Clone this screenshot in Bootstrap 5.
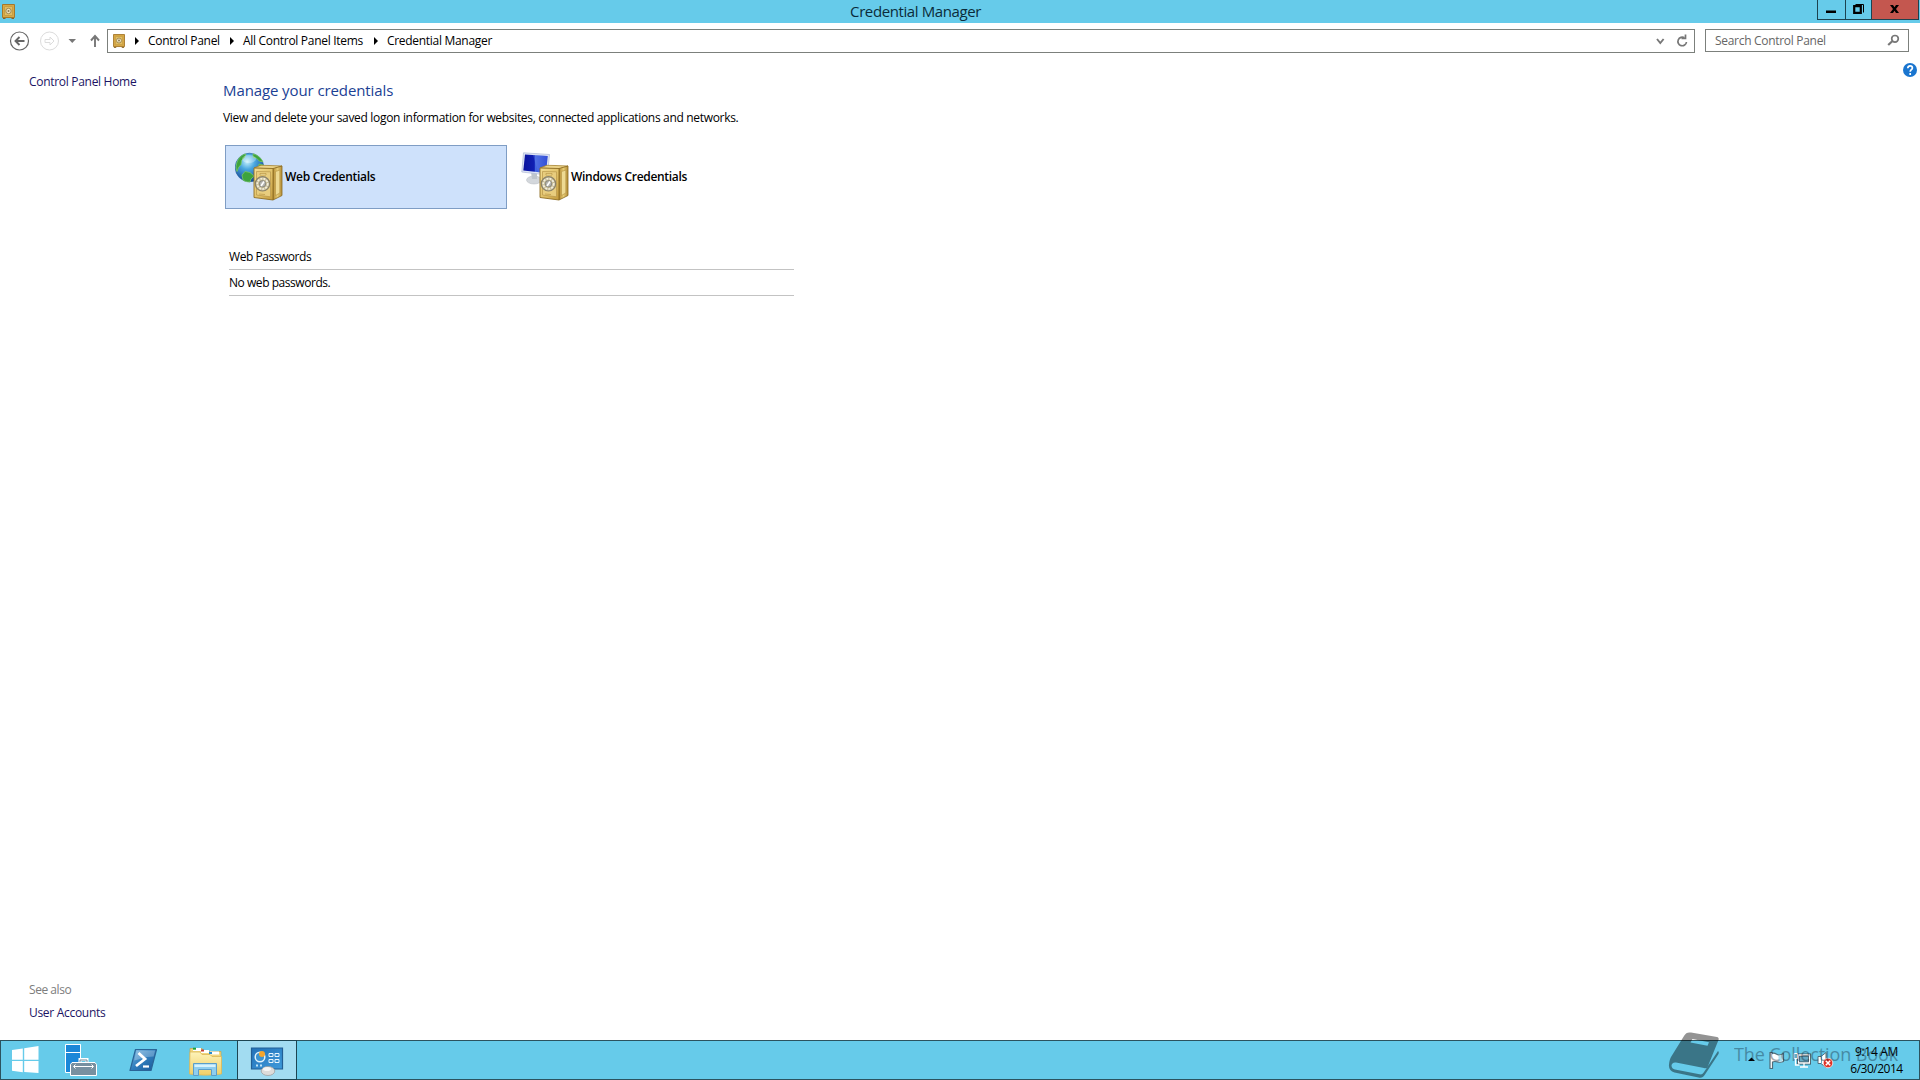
<!DOCTYPE html>
<html lang="en">
<head>
<meta charset="utf-8">
<title>Credential Manager</title>
<link href="https://cdn.jsdelivr.net/npm/bootstrap@5.3.0/dist/css/bootstrap.min.css" rel="stylesheet">
<style>
body{font-family:"Open Sans","Noto Sans",sans-serif;font-size:12px;line-height:16px;letter-spacing:-.3px;color:#000;background:#fff;white-space:nowrap;overflow:hidden}
svg{display:block;flex:none}
a,a:hover{color:inherit;text-decoration:none}
.title-bar{height:23px;background:#66cbea;padding-left:2px}
.title-text{font-size:15px;line-height:23px;letter-spacing:-.4px;padding-right:104px;color:#0b2b3a}
.win-buttons{top:0;left:1817px;height:20px;border:1px solid #1c4350;border-top:0}
.win-buttons .wb{border-right:1px solid #1c4350;height:19px}
.win-buttons .wb-min{width:28px}
.win-buttons .wb-max{width:26px}
.win-buttons .wb-close{width:46px;background:#c4574f;border-right:0}
.nav-strip{height:35px;padding:6px 11px 0 9px}
.nav-glyphs{width:98px;height:24px}
.address{width:1588px;height:24px;border:1px solid #7c807c;padding-left:5px;line-height:22px}
.crumb{margin-left:7px}
.crumb-cp{width:82px}
.crumb-all{margin-left:7px;width:131px}
.search-field{width:204px;height:23px;border:1px solid #7c807c;margin-left:10px;color:#666;padding:0 8px 0 9px;line-height:22px}
.side-pane{width:223px;padding:16px 0 19px 29px;color:#1b1464}
.see-also{color:#7d7d7d;letter-spacing:-.45px;margin-bottom:7px}
.main-pane{padding-top:21px}
.page-head{font-size:15px;line-height:22px;letter-spacing:-.1px;color:#1b3f94;font-weight:400;margin:0}
.page-sub{margin:9px 0 19px;letter-spacing:-.32px}
.vault-row{margin-left:2px}
.vault{width:282px;height:64px;border:1px solid #fff;padding:6px 0 0 9px}
.vault.on{background:#cee1fb;border-color:#7f9dc4}
.vault-name{font-weight:600;margin:17px 0 0 2px}
.pw-list{width:565px;margin:35px 0 0 6px;letter-spacing:-.45px}
.pw-list div{border-bottom:1px solid #c3c3c3;height:26px;padding-top:5px}
.task-bar{height:40px;background:#66cbea;border:1px solid #2b535f}
.task-btn{width:62px;height:38px}
.task-active{width:58px;margin-left:3px;background:#a2dcf1;box-shadow:0 0 0 1px #1d4552}
.clock{width:85px;line-height:17px;padding-top:2px}
.clock .day{letter-spacing:-.5px}
.help-dot{right:3px;top:63px}
.mark-brand{left:1667px;top:1030px;color:#000;opacity:.42}
.mark-brand span{font-size:18px;line-height:24px;letter-spacing:-.1px;margin:-2px 0 0 14px;color:#123;opacity:.9}
</style>
<script src="https://cdn.jsdelivr.net/npm/bootstrap@5.3.0/dist/js/bootstrap.bundle.min.js"></script>
</head>
<body class="vh-100 d-flex flex-column position-relative">
<svg width="0" height="0" class="position-absolute">
<defs>
<linearGradient id="gold" x1="0" y1="0" x2="1" y2="1"><stop offset="0" stop-color="#f3dd94"/><stop offset=".5" stop-color="#e3c46c"/><stop offset="1" stop-color="#c39a3c"/></linearGradient>
<linearGradient id="goldside" x1="0" y1="0" x2="1" y2="0"><stop offset="0" stop-color="#b48b33"/><stop offset=".5" stop-color="#e6cb74"/><stop offset="1" stop-color="#b38c36"/></linearGradient>
<radialGradient id="sea" cx=".42" cy=".3" r=".75"><stop offset="0" stop-color="#c5f1fd"/><stop offset=".35" stop-color="#4ba8e0"/><stop offset="1" stop-color="#10408f"/></radialGradient>
<linearGradient id="screen" x1="0" y1="0" x2="1" y2="0"><stop offset="0" stop-color="#0a139c"/><stop offset=".45" stop-color="#1020b4"/><stop offset=".5" stop-color="#4466e0"/><stop offset="1" stop-color="#1b35cd"/></linearGradient>
<linearGradient id="ps" x1="0" y1="0" x2="1" y2="1"><stop offset="0" stop-color="#79b8e2"/><stop offset=".5" stop-color="#2f7dbd"/><stop offset="1" stop-color="#1b5795"/></linearGradient>
<linearGradient id="folder" x1="0" y1="0" x2="0" y2="1"><stop offset="0" stop-color="#fdf3b8"/><stop offset="1" stop-color="#efcf68"/></linearGradient>
<linearGradient id="panel" x1="0" y1="0" x2="1" y2="1"><stop offset="0" stop-color="#2372b8"/><stop offset="1" stop-color="#3f9adb"/></linearGradient>
<symbol id="minisafe" viewBox="0 0 13 15"><path d="M.5.5h12v13h-12z" fill="#d9a845" stroke="#a5782b"/><path d="M1 14.500h2.500M9.500 14.500H12" stroke="#8a6424"/><path d="M2.500 2.500h8v9h-8z" fill="#e2bd62" stroke="#c79f45"/><circle cx="6.500" cy="7" r="2.700" fill="#efe3bd" stroke="#a08850"/><circle cx="6.500" cy="7" r="1" fill="#8a744a"/></symbol>
<symbol id="safe" viewBox="0 0 30 37"><path d="M1 3.500 8 .7 29 1.500 20 4.500z" fill="#ecd48a" stroke="#a5822f" stroke-width=".8"/><path d="M20 4 29 1.500 29 31 20 35.500z" fill="url(#goldside)" stroke="#8a6a22" stroke-width=".8"/><path d="M22.500 7 26.800 5.500v23L22.500 31z" fill="#eeda92" stroke="#b18f3c" stroke-width=".6"/><path d="M1 3.500 20 4v31.500L1 33z" fill="url(#gold)" stroke="#8f6e25" stroke-width=".9"/><path d="M3.500 7 17.500 7.300v25L3.500 30.500z" fill="#e8cd7e" stroke="#b8964a" stroke-width=".7"/><circle cx="9.500" cy="19.300" r="7.200" fill="#c7bc96" stroke="#8a826a" stroke-width="1.200"/><circle cx="9.500" cy="19.300" r="5.200" fill="none" stroke="#f1eedf" stroke-width="1.700" stroke-dasharray="2 1.100"/><circle cx="9.500" cy="19.300" r="3.200" fill="#b3b3ae" stroke="#77756b" stroke-width=".7"/><path d="m8 21.500 3-4.500" stroke="#fff" stroke-width="1.600"/><path d="M7 9h6v1.500H7zM6 29.500l6 .5" fill="#f7e8a9" stroke="#b18b36" stroke-width=".6"/></symbol>
</defs>
</svg>

<header class="title-bar d-flex align-items-center">
  <svg width="13" height="15"><use href="#minisafe"/></svg>
  <div class="title-text flex-grow-1 text-center">Credential Manager</div>
  <div class="win-buttons position-absolute d-flex">
    <div class="wb wb-min"><svg width="27" height="19"><path d="M8 10.500h10v2.500H8z" fill="#000"/></svg></div>
    <div class="wb wb-max"><svg width="25" height="19"><path d="M8.200 6.200h6.600v6.600H8.200z" fill="none" stroke="#000" stroke-width="2.200"/><path d="M9.500 4.500h8v8" fill="none" stroke="#000"/></svg></div>
    <div class="wb wb-close"><svg width="46" height="19"><path d="M18 5h3l1.500 2.300L24 5h3l-3 4 3 4h-3l-1.500-2.300L21 13h-3l3-4z" fill="#000"/></svg></div>
  </div>
</header>

<nav class="nav-strip d-flex">
  <svg class="nav-glyphs" viewBox="0 0 98 24" fill="none">
    <circle cx="10.500" cy="12" r="9" stroke="#666" stroke-width="1.200"/><path d="M15.500 12H6.500m4-4-4 4 4 4" stroke="#666" stroke-width="1.900"/>
    <circle cx="40.500" cy="12" r="9" stroke="#dcdcdc"/><path d="M36 10.500h5V8l4 4-4 4v-2.500h-5z" stroke="#dcdcdc"/>
    <path d="M59.500 10h7.500l-3.750 4z" fill="#777"/>
    <path d="M86 18V7m-4 4.500 4-4.500 4 4.500" stroke="#777" stroke-width="1.900"/>
  </svg>
  <div class="address d-flex">
    <svg class="mt-1" width="12" height="14"><use href="#minisafe" width="12" height="14"/></svg>
    <svg class="ms-2" width="8" height="22"><path d="M2 7v8l4-4z"/></svg>
    <a href="#" class="crumb crumb-cp">Control Panel</a>
    <svg width="6" height="22"><path d="M0 7v8l4-4z"/></svg>
    <a href="#" class="crumb crumb-all">All Control Panel Items</a>
    <svg width="6" height="22"><path d="M0 7v8l4-4z"/></svg>
    <a href="#" class="crumb">Credential Manager</a>
    <svg class="ms-auto" width="45" height="22" fill="none" stroke="#777"><path d="m8 9 3.300 4 3.300-4" stroke-width="1.900"/><path d="M35.500 7.800A4.300 4.300 0 1 0 37.500 12" stroke-width="1.700"/><path d="M32.500 8.500h4V4.500" stroke-width="1.700"/></svg>
  </div>
  <div class="search-field d-flex justify-content-between">
    <span>Search Control Panel</span>
    <svg width="13" height="21" fill="none" stroke="#777"><circle cx="8" cy="8.800" r="3.300" stroke-width="1.700"/><path d="m5.500 11-4.300 4" stroke-width="2.200"/></svg>
  </div>
</nav>

<main class="d-flex flex-grow-1">
  <aside class="side-pane d-flex flex-column">
    <a href="#">Control Panel Home</a>
    <div class="see-also mt-auto">See also</div>
    <a href="#">User Accounts</a>
  </aside>
  <section class="main-pane">
    <h1 class="page-head">Manage your credentials</h1>
    <p class="page-sub">View and delete your saved logon information for websites, connected applications and networks.</p>
    <div class="vault-row d-flex gap-1">
      <div class="vault on d-flex">
        <svg width="48" height="50" viewBox="0 0 48 50"><circle cx="14.500" cy="15.500" r="14.300" fill="url(#sea)" stroke="#1d5a9a" stroke-width=".6"/><path d="M2.500 9C4.500 4.500 8 2.300 11 2L9.500 5.500l-3 3-.5 4-2.500 3-1.500 4c-1.500-3-1-7 .5-10.500zM18 1.800c4.500 1 8 4 10 8l-3.500-.6-3-3-3.500-1zM10 19.500l5 1 4 3.500-3 3-1 3c-4 0-6-1.200-7-2l-1-5zM24 12l4.500 1 .2 5-3 2-2.500-3z" fill="#3da33d" stroke="#83ce63" stroke-width=".7"/><ellipse cx="14" cy="7" rx="7" ry="4" fill="#fff" opacity=".3"/><use href="#safe" x="18" y="12.500" width="30" height="37"/></svg>
        <span class="vault-name">Web Credentials</span>
      </div>
      <div class="vault d-flex">
        <svg width="48" height="50" viewBox="0 0 48 50"><ellipse cx="13" cy="28" rx="7.500" ry="4" fill="#d3d7dc" stroke="#b4b8bf" stroke-width=".5"/><path d="m10 20 6 1v6h-5z" fill="#bfc5cc"/><path d="M2.500.8 28.500 2.500 26.500 23 .8 20z" fill="#dfe5f4" stroke="#adb8d5" stroke-width=".7"/><path d="M4 2.500 26.700 4 25 21 2.300 18.500z" fill="url(#screen)"/><path d="m12 3 5 17.200 8 .8 1.700-17z" fill="#6d8cf0" opacity=".3"/><use href="#safe" x="18" y="12.500" width="30" height="37"/></svg>
        <span class="vault-name">Windows Credentials</span>
      </div>
    </div>
    <div class="pw-list">
      <div>Web Passwords</div>
      <div>No web passwords.</div>
    </div>
  </section>
</main>

<svg class="help-dot position-absolute" width="14" height="14"><circle cx="7" cy="7" r="7" fill="#1a75cf"/><path d="M4.800 5.300c0-3.400 4.600-3.100 4.600-.3C9.400 6.700 7.200 6.800 7.200 8.800M7.200 10.100v1.800" fill="none" stroke="#fff" stroke-width="1.700"/></svg>

<footer class="task-bar d-flex">
  <svg width="48" height="38"><path d="M11 8.300 21.800 6.700V18H11zM23.200 6.500 37.500 4.300V18H23.200zM11 19.300h10.800v11.200L11 29zM23.200 19.300h14.300v12L23.200 30.200z" fill="#fff" transform="translate(0 .8)"/></svg>
  <svg class="task-btn" viewBox="0 0 62 38"><path d="M16.500 3.500h15v28h-15z" fill="#1b87d8" stroke="#fff"/><path d="M16.500 11.500h15" stroke="#fff"/><path d="M31 12h1v20H26V21h5z" fill="#66cbea"/><path d="M31.500 3.500V19" stroke="#fff"/><path d="M31 22v-3.500h7V22" fill="none" stroke="#fff" stroke-width="3"/><path d="M31 22v-3h7v3" fill="none" stroke="#708a99"/><path d="M23 21.500h23l1.500 2v11h-26v-11z" fill="#7890a0" stroke="#fff"/><path d="M25 25.500h19M26.500 23.500l-2 2 2 2M42.500 23.500l2 2-2 2" fill="none" stroke="#fff"/></svg>
  <svg class="task-btn" viewBox="0 0 62 38"><path d="M24.500 8.500h21l-5.500 21H19z" fill="url(#ps)" stroke="#2a6598" stroke-width="1.200" stroke-linejoin="round"/><path d="M25.500 9.500h18.600l-1.500 6c-9 .2-14 3-19.500 4z" fill="#fff" opacity=".25"/><path d="m27.500 12 6.500 6-9 7" fill="none" stroke="#fff" stroke-width="2.800"/><path d="M32 25.500h6" stroke="#fff" stroke-width="2.200"/></svg>
  <svg class="task-btn" viewBox="0 0 62 38"><path d="M17 7.500h12l1 3h18v22H17z" fill="#f1d77d" stroke="#c8a548" stroke-width=".7"/><path d="M20 8.500h8M28 10.500h8M37 12h9" stroke="#fff" stroke-width="3"/><path d="M20 7.700h3" stroke="#1ba238" stroke-width="2"/><path d="M28 9.500h3" stroke="#c74232" stroke-width="2"/><path d="M36 12h3" stroke="#278bd0" stroke-width="2"/><path d="M17 11h10l2 2.500h8l2 2h9.500V33c-10 1.500-22 1.500-32 0z" fill="url(#folder)" stroke="#ddb958" stroke-width=".8"/><path d="M20.500 22.500h23v12h-5v-6h-13v6h-5z" fill="#8fceef" stroke="#5b9ec9"/><path d="M21.500 23.500h21v2.500h-21z" fill="#d6f2fd"/></svg>
  <div class="task-btn task-active"><svg width="58" height="38"><path d="M13.500 7h31v21h-31z" fill="url(#panel)" stroke="#235f95" stroke-width="1.200"/><circle cx="22" cy="16" r="4.800" fill="#3b93cf" stroke="#dff1fc" stroke-width="1.500"/><circle cx="24" cy="13" r="3" fill="#f5a52c"/><path d="M31 12.500h4v3h-4zM37 12.500h4v3h-4zM31 18.500h4v3h-4zM37 18.500h4v3h-4z" fill="none" stroke="#e6f5fd"/><path d="M18 24.500h2M22 24.500h2" stroke="#c0e5f8" stroke-width="2"/><ellipse cx="30" cy="30" rx="6.800" ry="4.500" fill="#dddcda" stroke="#9a9a9a" stroke-width=".7"/><ellipse cx="29" cy="28" rx="4" ry="2" fill="#fff" opacity=".7"/></svg></div>
  <svg class="ms-auto" width="92" height="38" viewBox="0 0 92 38">
    <path d="m6 20 3.500-3.500 3.500 3.500z"/>
    <g transform="translate(2.500)">
    <path d="M25.500 11.500h2.500v1c3-1.500 4 2 7 1.500 1-.2 2-.5 4-1.500v8c-5 2.500-7-1.500-11 .5v6.500h-2.500z" fill="#fff" stroke="#4e6c79" stroke-width="1.200"/>
    <path d="M34 14.500c1.500 0 3-.5 4-1v6.500c-1.500.5-2.500.8-4 .3z" fill="#a9dff2"/>
    <path d="M54 14h11v8h-11z" fill="#66abc5" stroke="#36505b" stroke-width="3"/><path d="M54 14h11v8H54zM59.500 22v4M55.500 26h8M51 17v7h4" fill="none" stroke="#fff" stroke-width="1.300"/><path d="M49.500 12.500h3.500v5h-3.500z" fill="#66abc5" stroke="#fff"/>
    <path d="M73.500 15.500h3l5-4v15l-5-4h-3z" fill="#fff" stroke="#536e7b"/><path d="M77 15v8" stroke="#66abc5"/><circle cx="83.500" cy="22" r="4.800" fill="#df3327" stroke="#fff" stroke-width=".7"/><path d="m81.300 19.800 4.400 4.400m0-4.400-4.400 4.400" stroke="#fff" stroke-width="1.500"/>
    </g></svg>
  <div class="clock text-center"><div>9:14 AM</div><div class="day">6/30/2014</div></div>
</footer>

<div class="mark-brand position-absolute d-flex align-items-center pe-none">
  <svg width="53" height="50"><path d="M24 2.500 50 7c1.500.3 2 1.500 1.500 3L41 36c-.8 2-2 2.500-4 2L9 32.500c-2.500-.5-4.500 1-4.500 3 0 2.500 1.500 3.500 3.500 4l24.500 4.800c2 .4 3-.1 4.200-1.800L51 21c1 1 1 2 .3 3.200L38 44.500c-2 3-3.500 3.700-6.500 3L7.500 42.500C3.500 41.500 1.500 38.500 2 34.500 2.300 31 3 29 4 27L17 6c1.800-3 3.500-4 7-3.500zM23.500 12.500l17 3.200 1.500-3.500-16.500-3.200z" fill-rule="evenodd"/></svg>
  <span>The Collection Book</span>
</div>
</body>
</html>
